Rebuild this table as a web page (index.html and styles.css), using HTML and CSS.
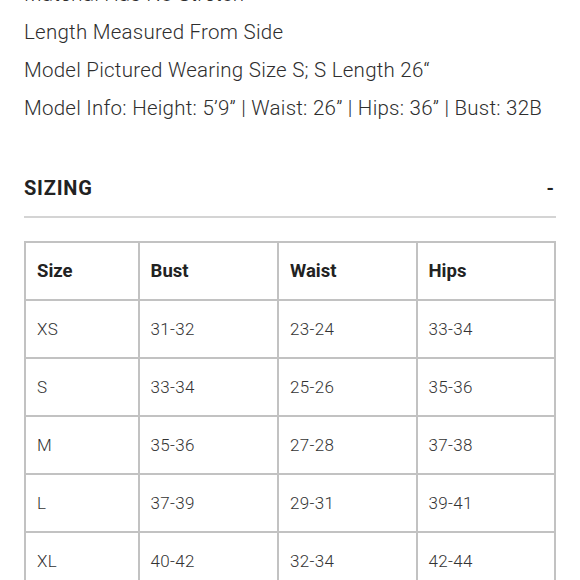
FILE: index.html
```html
<!DOCTYPE html>
<html>
<head>
<meta charset="utf-8">
<link rel="stylesheet" href="styles.css">
</head>
<body>
<div class="page">
  <ul class="details">
    <li>Material Has No Stretch</li>
    <li>Length Measured From Side</li>
    <li>Model Pictured Wearing Size S; S Length 26“</li>
    <li>Model Info: Height: 5’9” | Waist: 26” | Hips: 36” | Bust: 32B</li>
  </ul>
  <div class="section-head">
    <span class="section-title">SIZING</span>
    <span class="toggle">-</span>
  </div>
  <table class="sizes">
    <colgroup>
      <col class="c1"><col class="c2"><col class="c3"><col class="c4">
    </colgroup>
    <thead>
      <tr><th>Size</th><th>Bust</th><th>Waist</th><th>Hips</th></tr>
    </thead>
    <tbody>
      <tr><td>XS</td><td>31-32</td><td>23-24</td><td>33-34</td></tr>
      <tr><td>S</td><td>33-34</td><td>25-26</td><td>35-36</td></tr>
      <tr><td>M</td><td>35-36</td><td>27-28</td><td>37-38</td></tr>
      <tr><td>L</td><td>37-39</td><td>29-31</td><td>39-41</td></tr>
      <tr><td>XL</td><td>40-42</td><td>32-34</td><td>42-44</td></tr>
    </tbody>
  </table>
</div>
</body>
</html>
```

FILE: styles.css
```css
html, body {
  margin: 0;
  padding: 0;
  background: #fff;
}
body {
  font-family: Roboto, "Liberation Sans", sans-serif;
  color: #3a3a3a;
  overflow: hidden;
}
.page {
  padding: 0 24px;
}
.details {
  list-style: none;
  margin: -25px 0 0 0;
  padding: 0;
  font-size: 20.5px;
  line-height: 38px;
  font-weight: 300;
  letter-spacing: 0.25px;
  color: #2e2e2e;
}
.section-head {
  display: flex;
  justify-content: space-between;
  align-items: center;
  margin-top: 48px;
  padding-bottom: 15px;
  border-bottom: 2px solid #d4d4d4;
}
.section-title {
  font-size: 20px;
  font-weight: 700;
  letter-spacing: 0.8px;
  color: #222;
  line-height: 26px;
}
.toggle {
  font-size: 19px;
  font-weight: 700;
  color: #222;
  padding-right: 2px;
}
.sizes {
  margin-top: 23px;
  width: 100%;
  border-collapse: collapse;
  font-size: 17px;
}
.c1 { width: 114px; }
.c2 { width: 140px; }
.c3 { width: 139px; }
.c4 { width: 139px; }
.sizes th,
.sizes td {
  border: 2px solid #c2c2c2;
  height: 58px;
  box-sizing: border-box;
  padding: 0 11px;
  text-align: left;
  vertical-align: middle;
}
.sizes th {
  font-size: 18.5px;
  font-weight: 700;
  color: #222;
}
.sizes td {
  font-weight: 300;
  letter-spacing: 0.3px;
  color: #333;
}
```
